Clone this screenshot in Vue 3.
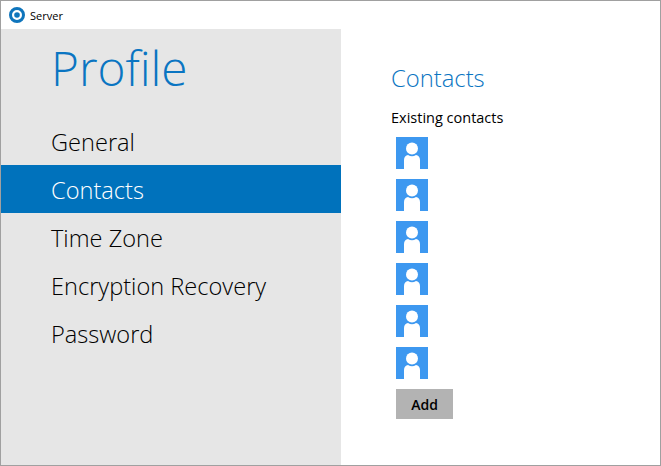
<script setup>
    //------ data ------
    const menuItems = [
        { label: 'General', active: false },
        { label: 'Contacts', active: true },
        { label: 'Time Zone', active: false },
        { label: 'Encryption Recovery', active: false },
        { label: 'Password', active: false },
    ];
    const contacts = [1, 2, 3, 4, 5, 6];
</script>

<template>
    <div class="window">
        <div class="titlebar">
            <svg class="app-icon" width="16" height="16" viewBox="0 0 16 16">
                <circle cx="8" cy="8" r="6.5" fill="none" stroke="#0f75bc" stroke-width="3" />
                <circle cx="8" cy="8" r="2.8" fill="#0f75bc" />
            </svg>
            <span class="title-text">Server</span>
        </div>

        <div class="content">
            <aside class="sidebar">
                <h1 class="profile">Profile</h1>
                <nav class="menu">
                    <div
                        v-for="item in menuItems"
                        :key="item.label"
                        class="menu-item"
                        :class="{ active: item.active }"
                    >{{ item.label }}</div>
                </nav>
            </aside>

            <main class="panel">
                <h2 class="panel-title">Contacts</h2>
                <div class="panel-label">Existing contacts</div>
                <div class="contact-list">
                    <svg v-for="c in contacts" :key="c" class="avatar" width="32" height="32" viewBox="0 0 32 32">
                        <rect width="32" height="32" fill="#3d98f0" />
                        <circle cx="16" cy="11.5" r="6" fill="#fff" />
                        <path d="M8 32V23C8 20.2 9.8 18.4 12 18A7.2 7.2 0 0 0 20 18C22.2 18.4 24 20.2 24 23V32Z" fill="#fff" />
                    </svg>
                </div>
                <button class="add-btn">Add</button>
            </main>
        </div>
    </div>
</template>

<style>
    html, body {
        margin: 0;
        background: #fff;
    }
</style>

<style scoped>
    .window {
        width: 661px;
        height: 466px;
        box-sizing: border-box;
        border: 1px solid #a0a0a0;
        display: flex;
        flex-direction: column;
        overflow: hidden;
        background: #fff;
        font-family: "Open Sans", sans-serif;
    }
    .titlebar {
        height: 28px;
        flex: none;
        display: flex;
        align-items: center;
        padding-left: 8px;
        gap: 5px;
    }
    .title-text {
        font-size: 11px;
        color: #000;
    }
    .content {
        flex: 1;
        display: flex;
        min-height: 0;
    }
    .sidebar {
        width: 340px;
        flex: none;
        background: #e6e6e6;
    }
    .profile {
        margin: 0 0 0 50px;
        padding-top: 6px;
        height: 82px;
        font-size: 47.7px;
        line-height: 66px;
        font-weight: 300;
        color: #0a75c2;
    }
    .menu-item {
        height: 48px;
        line-height: 51px;
        padding-left: 50px;
        font-size: 23.6px;
        font-weight: 300;
        color: #000;
    }
    .menu-item.active {
        background: #0072bc;
        color: #fff;
    }
    .panel {
        flex: 1;
        padding: 33px 0 0 50px;
    }
    .panel-title {
        margin: 0;
        font-size: 23.8px;
        line-height: 33px;
        font-weight: 300;
        color: #0a75c2;
    }
    .panel-label {
        margin-top: 13px;
        font-size: 14.5px;
        line-height: 20px;
        color: #000;
    }
    .contact-list {
        margin: 9px 0 0 5px;
        display: flex;
        flex-direction: column;
        gap: 10px;
    }
    .avatar {
        display: block;
    }
    .add-btn {
        display: block;
        margin: 10px 0 0 5px;
        width: 57px;
        height: 30px;
        padding: 0;
        border: none;
        background: #b3b3b3;
        color: #000;
        font-family: inherit;
        font-size: 14px;
        font-weight: 600;
    }
</style>
